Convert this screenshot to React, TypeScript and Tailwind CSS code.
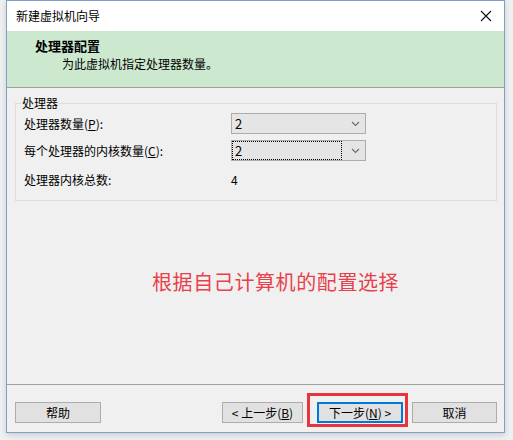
import React from "react";

const font = { fontFamily: '"Noto Sans CJK SC", "Microsoft YaHei", sans-serif' };

function Chevron() {
  return (
    <svg width="9" height="6" viewBox="0 0 9 6" className="shrink-0">
      <path d="M1 1 L4.5 4.5 L8 1" fill="none" stroke="#6b6b6b" strokeWidth="1.1" />
    </svg>
  );
}

function Combo({ focused }: { focused?: boolean }) {
  return (
    <div className="w-[135px] h-[21px] bg-[#e5e5e5] border border-[#acacac] flex items-center pr-[5px]">
      <div
        className={
          focused
            ? "flex-1 h-[19px] border border-dotted border-black flex items-center pl-[2px] mr-[9px]"
            : "flex-1 h-[19px] flex items-center pl-[3px] mr-[9px]"
        }
      >
        <span className="text-[13px] leading-none text-black">2</span>
      </div>
      <Chevron />
    </div>
  );
}

function Btn({ children, className = "" }: { children: React.ReactNode; className?: string }) {
  return (
    <div
      className={
        "h-[21px] bg-[#e1e1e1] flex items-center justify-center text-[12px] text-black " + className
      }
    >
      {children}
    </div>
  );
}

export default function App() {
  return (
    <div className="w-[513px] h-[440px] bg-[#eef0f2] pl-[6px] pr-[8px] pb-[7px]" style={font}>
      <div className="w-[499px] h-[433px] border border-[#7f9fc9] bg-[#f0f0f0] flex flex-col shadow-[0_2px_6px_rgba(0,0,0,0.15)]">
        {/* title bar */}
        <div className="h-[30px] bg-white flex items-center justify-between pl-[9px] pr-[9px] shrink-0">
          <span className="text-[12px] text-black">新建虚拟机向导</span>
          <svg width="12" height="12" viewBox="0 0 12 12" className="mr-[3px]">
            <path d="M1 1 L11 11 M11 1 L1 11" stroke="#111" strokeWidth="1.1" />
          </svg>
        </div>
        {/* header */}
        <div className="h-[57px] bg-[#cce8cf] border-b border-[#a0a0a0] shrink-0 pl-[28px] pt-[6px]">
          <div className="text-[13px] font-bold text-black leading-[18px]">处理器配置</div>
          <div className="text-[12px] text-black leading-[18px] pl-[27px]">为此虚拟机指定处理器数量。</div>
        </div>
        {/* content */}
        <div className="flex-1 flex flex-col">
          <fieldset className="mt-[7px] ml-[8px] mr-[7px] border border-[#dcdcdc] px-[8px] pt-[2px] pb-[10px]">
            <legend className="ml-[-3px] px-[1px] text-[12px] leading-[16px] text-black">处理器</legend>
            <div className="flex flex-col gap-[6px]">
              <div className="h-[21px] flex items-center">
                <span className="w-[207px] text-[12px] text-black">
                  处理器数量(<span className="underline">P</span>):
                </span>
                <Combo />
              </div>
              <div className="h-[21px] flex items-center">
                <span className="w-[207px] text-[12px] text-black">
                  每个处理器的内核数量(<span className="underline">C</span>):
                </span>
                <Combo focused />
              </div>
              <div className="h-[21px] flex items-center mt-[2px]">
                <span className="w-[207px] text-[12px] text-black">处理器内核总数:</span>
                <span className="text-[12px] text-black">4</span>
              </div>
            </div>
          </fieldset>
          <div className="mt-[67px] pl-[145px] text-[20px] leading-[28px] tracking-[0.6px] text-[#e8404a]">
            根据自己计算机的配置选择
          </div>
        </div>
        {/* buttons */}
        <div className="h-[48px] border-t border-[#a0a0a0] shrink-0 flex items-start pt-[17px] pl-[8px] pr-[7px]">
          <Btn className="w-[86px] border border-[#adadad]">帮助</Btn>
          <div className="flex-1" />
          <Btn className="w-[81px] border border-[#adadad]">
            &lt; 上一步(<span className="underline">B</span>)
          </Btn>
          <div className="relative ml-[14px]">
            <Btn className="w-[86px] border-2 border-[#0078d7]">
              下一步(<span className="underline">N</span>) &gt;
            </Btn>
            <div className="absolute left-[-10px] top-[-9px] w-[101px] h-[34px] border-[3px] border-[#e8343c]" />
          </div>
          <Btn className="w-[85px] ml-[9px] border border-[#adadad]">取消</Btn>
        </div>
      </div>
    </div>
  );
}
